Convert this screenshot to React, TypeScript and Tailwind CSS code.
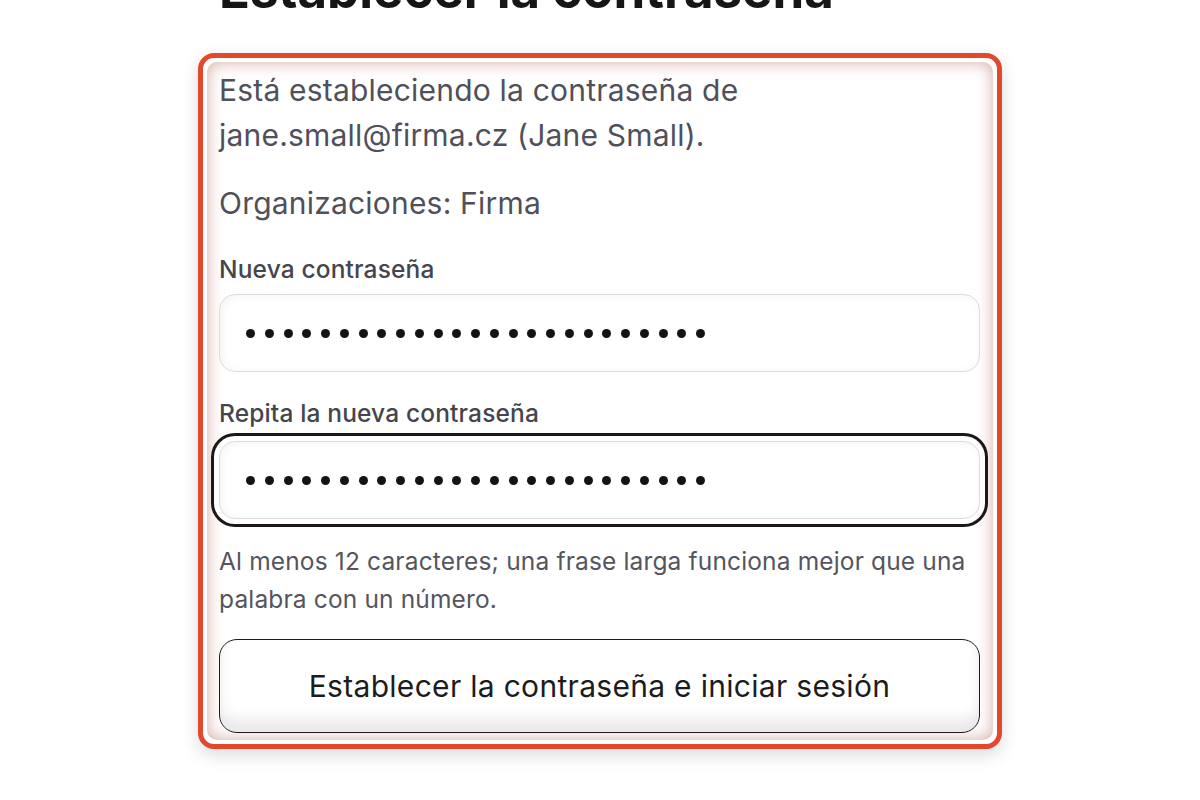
import React from "react";

const font = { fontFamily: "Inter, 'Noto Sans', sans-serif" };

function Dots() {
  return (
    <div className="flex items-center gap-[9.75px]">
      {Array.from({ length: 25 }).map((_, i) => (
        <span key={i} className="block w-[9px] h-[9px] rounded-full bg-[#141414]" />
      ))}
    </div>
  );
}

export default function App() {
  return (
    <div className="min-h-[800px] w-full bg-white overflow-hidden" style={font}>
      <div className="w-[804px] mx-auto">
        <h1 className="pl-[21px] mt-[-36px] text-[51px] leading-[51px] font-bold text-[#161616] whitespace-nowrap">
          Establecer la contraseña
        </h1>
        <div className="mt-[38px] rounded-[16px] border-[5px] border-[#e2482c] bg-white p-[4px] shadow-[0_6px_18px_rgba(0,0,0,0.14)]">
          <div className="rounded-[10px] bg-white shadow-[inset_0_0_16px_rgba(180,100,90,0.55)] pl-[12px] pr-[13px] pt-[6px] pb-[7px]">
            <p className="text-[30px] leading-[45px] tracking-[0.2px] text-[#50505a]">
              Está estableciendo la contraseña de
              <br />
              jane.small@firma.cz (Jane Small).
            </p>
            <p className="mt-[23px] text-[30px] leading-[45px] tracking-[0.2px] text-[#50505a]">Organizaciones: Firma</p>
            <label className="block mt-[25px] text-[24.5px] leading-[36px] font-medium tracking-[0.15px] text-[#45454d]">
              Nueva contraseña
            </label>
            <div className="mt-[7px] h-[78px] rounded-[16px] border border-[#dcdcdc] bg-white shadow-[inset_2px_1px_8px_rgba(0,0,0,0.05)] flex items-center pl-[26px]">
              <Dots />
            </div>
            <label className="block mt-[23px] text-[24.5px] leading-[36px] font-medium tracking-[0.15px] text-[#45454d]">
              Repita la nueva contraseña
            </label>
            <div className="mt-[10px] h-[78px] rounded-[16px] border border-[#dcdcdc] bg-white shadow-[inset_2px_1px_8px_rgba(0,0,0,0.05),0_0_0_5px_#ffffff,0_0_0_8px_#1c1818] flex items-center pl-[26px]">
              <Dots />
            </div>
            <p className="mt-[23px] text-[24.5px] leading-[38px] tracking-[0.15px] text-[#55555e]">
              Al menos 12 caracteres; una frase larga funciona mejor que una
              <br />
              palabra con un número.
            </p>
            <button className="mt-[21px] w-full h-[94px] rounded-[18px] border-[1.5px] border-[#1c1c1c] bg-white shadow-[inset_0_-12px_14px_rgba(0,0,0,0.09)] text-[30px] tracking-[0.3px] text-[#1c1c1c] flex items-center justify-center">
              Establecer la contraseña e iniciar sesión
            </button>
          </div>
        </div>
      </div>
    </div>
  );
}
